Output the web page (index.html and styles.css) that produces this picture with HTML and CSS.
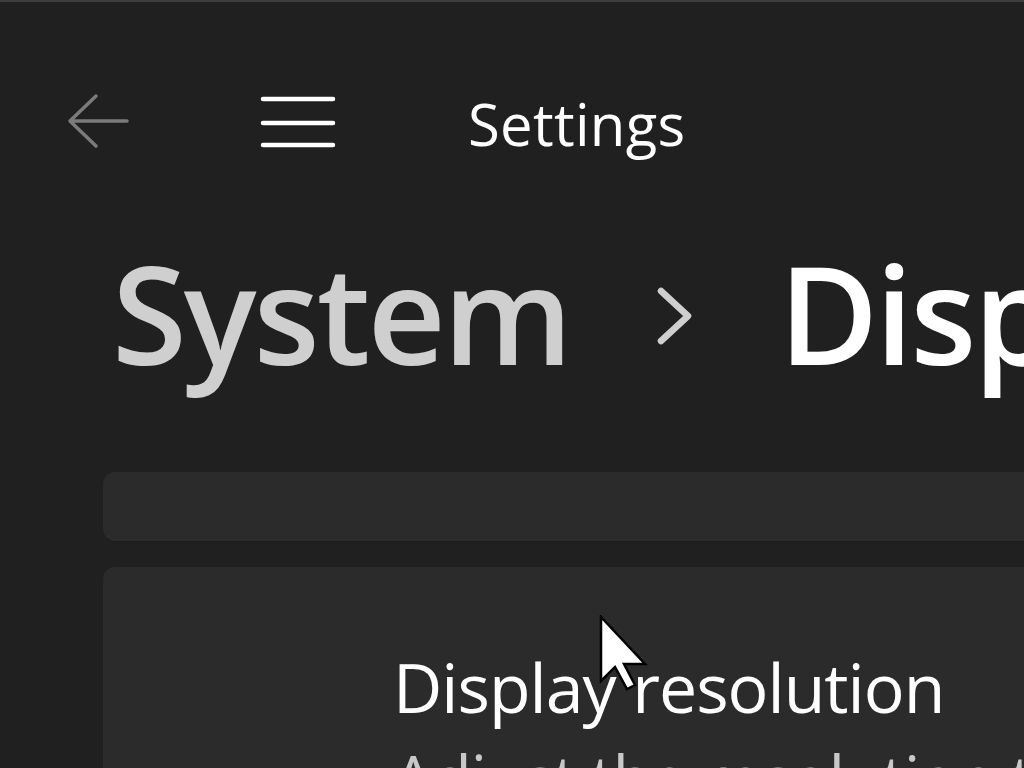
FILE: index.html
```html
<!DOCTYPE html>
<html lang="en">
<head>
<meta charset="utf-8">
<title>Settings</title>
<link rel="stylesheet" href="styles.css">
</head>
<body>
<div class="window">
  <header class="titlebar">
    <button class="icon-btn back" aria-label="Back">
      <svg width="62" height="56" viewBox="0 0 62 56"><path d="M29 3 L3 28 L29 53 M3 28 H60" fill="none" stroke="#7b7b7b" stroke-width="3.5" stroke-linecap="round" stroke-linejoin="round"/></svg>
    </button>
    <button class="icon-btn menu" aria-label="Menu">
      <svg width="76" height="54" viewBox="0 0 76 54"><path d="M3 4 H73 M3 28 H73 M3 50 H73" fill="none" stroke="#ffffff" stroke-width="4.5" stroke-linecap="round"/></svg>
    </button>
    <span class="app-title">Settings</span>
  </header>

  <h1 class="breadcrumb">
    <span class="crumb-parent">System</span>
    <svg class="chevron" width="40" height="60" viewBox="0 0 40 60"><path d="M5 5 L32 30 L5 55" fill="none" stroke="#cfcfcf" stroke-width="6.5" stroke-linecap="round" stroke-linejoin="round"/></svg>
    <span class="crumb-current">Display</span>
  </h1>

  <section class="cards">
    <div class="card card-top"></div>
    <div class="card card-setting">
      <div class="setting-text">
        <div class="setting-title">Display resolution</div>
        <div class="setting-desc">Adjust the resolution to fit your connected display</div>
      </div>
    </div>
  </section>

  <svg class="cursor" width="52" height="76" viewBox="0 0 52 76"><path d="M2 2 L2 66 L16 52 L28 74 L36 70 L25 49 L46 49 Z" fill="#ffffff" stroke="#000000" stroke-width="2.5" stroke-linejoin="miter"/></svg>
</div>
</body>
</html>
```

FILE: styles.css
```css
html, body {
  margin: 0;
  padding: 0;
  width: 1024px;
  height: 768px;
  overflow: hidden;
  background: #202020;
}

.window {
  position: relative;
  width: 1024px;
  height: 768px;
  overflow: hidden;
  background: #202020;
  border-top: 2px solid #3d3d3d;
  box-sizing: border-box;
  font-family: "Open Sans", "Noto Sans", sans-serif;
  color: #ffffff;
}

.titlebar {
  display: flex;
  height: 238px;
  padding-left: 67px;
  box-sizing: border-box;
  align-items: flex-start;
  padding-top: 91px;
}

.icon-btn {
  background: none;
  border: none;
  padding: 0;
  margin: 0;
  display: flex;
  flex-shrink: 0;
}

.back { margin-right: 131px; margin-top: 0; }
.menu { margin-right: 132px; margin-top: 2px; }

.app-title {
  font-size: 58px;
  line-height: 1;
  font-weight: 400;
  color: #ffffff;
  letter-spacing: 0.3px;
  margin-top: 2px;
  white-space: nowrap;
}

.breadcrumb {
  display: flex;
  align-items: center;
  margin: -42px 0 44px 0;
  padding-left: 112px;
  white-space: nowrap;
  height: 230px;
  font-weight: 600;
  font-size: 136px;
  letter-spacing: -3px;
  line-height: 1;
}

.breadcrumb > * { flex-shrink: 0; }

.crumb-parent { color: #cfcfcf; }
.chevron { margin-left: 86px; margin-right: 83px; margin-top: 6px; }
.crumb-current { color: #ffffff; }

.cards {
  display: flex;
  flex-direction: column;
  gap: 26px;
  padding-left: 103px;
}

.card {
  width: 1100px;
  flex-shrink: 0;
  background: #2b2b2b;
  border-radius: 12px;
  box-shadow: 0 1px 0 #1c1c1c;
}

.card-top { height: 69px; }

.card-setting {
  height: 400px;
  padding-left: 290px;
  padding-top: 76px;
  box-sizing: border-box;
}

.setting-title {
  font-size: 68px;
  line-height: 1.3;
  letter-spacing: -1px;
  color: #ffffff;
  white-space: nowrap;
}

.setting-desc {
  font-size: 64px;
  line-height: 1.3;
  margin-top: 5px;
  color: #c8c8c8;
  white-space: nowrap;
  letter-spacing: -1px;
}

.cursor {
  position: absolute;
  left: 599px;
  top: 613px;
}
```
